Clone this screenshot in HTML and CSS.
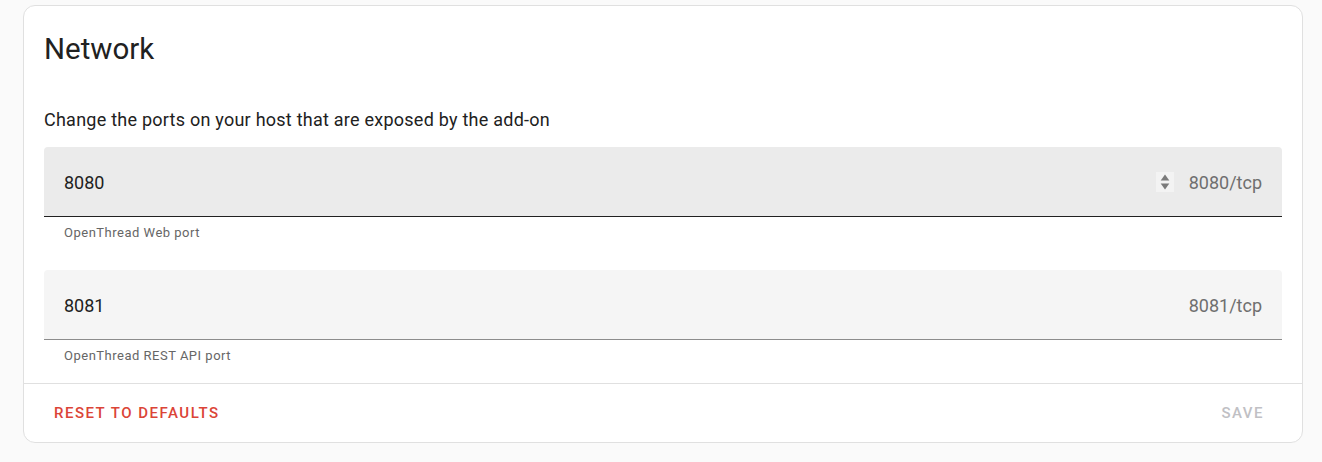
FILE: index.html
```html
<!DOCTYPE html>
<html>
<head>
<meta charset="utf-8">
<link rel="stylesheet" href="styles.css">
</head>
<body>
<div class="card">
  <div class="card-header">Network</div>
  <div class="card-content">
    <p class="description">Change the ports on your host that are exposed by the add-on</p>
    <div class="field-group">
      <div class="field field-hover">
        <span class="value">8080</span>
        <span class="spinner">
          <svg width="18" height="20" viewBox="0 0 18 20"><rect width="18" height="20" fill="#f3f3f3"/><path d="M4.7 8.4 L9 2.6 L13.3 8.4 Z" fill="#7a7a7a"/><path d="M4.7 11.6 L13.3 11.6 L9 17.4 Z" fill="#7a7a7a"/></svg>
        </span>
        <span class="suffix">8080/tcp</span>
      </div>
      <div class="helper">OpenThread Web port</div>
    </div>
    <div class="field-group">
      <div class="field">
        <span class="value">8081</span>
        <span class="suffix">8081/tcp</span>
      </div>
      <div class="helper">OpenThread REST API port</div>
    </div>
  </div>
  <div class="card-actions">
    <button class="btn btn-reset">Reset to defaults</button>
    <button class="btn btn-save">Save</button>
  </div>
</div>
</body>
</html>
```

FILE: styles.css
```css
* { box-sizing: border-box; }
html, body {
  margin: 0;
  padding: 0;
  background: #fafafa;
  font-family: Roboto, "Noto Sans", sans-serif;
  color: #212121;
}
body {
  padding: 5px 19px 0 23px;
}
.card {
  background: #fff;
  border: 1px solid #e0e0e0;
  border-radius: 12px;
  height: 438px;
  display: flex;
  flex-direction: column;
}
.card-header {
  padding: 19px 20px 0 20px;
  height: 67px;
  font-size: 29.5px;
  line-height: 48px;
  font-weight: 400;
}
.card-content {
  padding: 0 20px 19px 20px;
}
.description {
  margin: 35px 0 15px 0;
  font-size: 18px;
  line-height: 24px;
  letter-spacing: 0.24px;
}
.field-group + .field-group {
  margin-top: 29px;
}
.field {
  height: 70px;
  background: #f5f5f5;
  border-bottom: 1px solid #8c8c8c;
  border-radius: 4px 4px 0 0;
  display: flex;
  align-items: center;
  padding: 0 20px;
  font-size: 18px;
}
.field-hover {
  background: #ebebeb;
  border-bottom-color: #212121;
}
.value {
  flex: 1;
  color: #212121;
  padding-top: 2px;
}
.spinner {
  display: flex;
  margin-right: 15px;
  margin-top: 0;
}
.suffix {
  color: #6f6f6f;
  padding-top: 2px;
}
.helper {
  padding: 8px 20px 0 20px;
  font-size: 13px;
  line-height: 16px;
  color: #666;
  letter-spacing: 0.5px;
}
.card-actions {
  flex: 1;
  border-top: 1px solid #e0e0e0;
  display: flex;
  align-items: center;
  justify-content: space-between;
  padding: 0 30px;
}
.btn {
  background: none;
  border: none;
  font-family: Roboto, sans-serif;
  font-size: 15px;
  font-weight: 500;
  letter-spacing: 1.5px;
  text-transform: uppercase;
  padding: 0;
}
.btn-reset {
  color: #db4437;
}
.btn-save {
  color: #c0c0c4;
  margin-right: 8px;
}
```
